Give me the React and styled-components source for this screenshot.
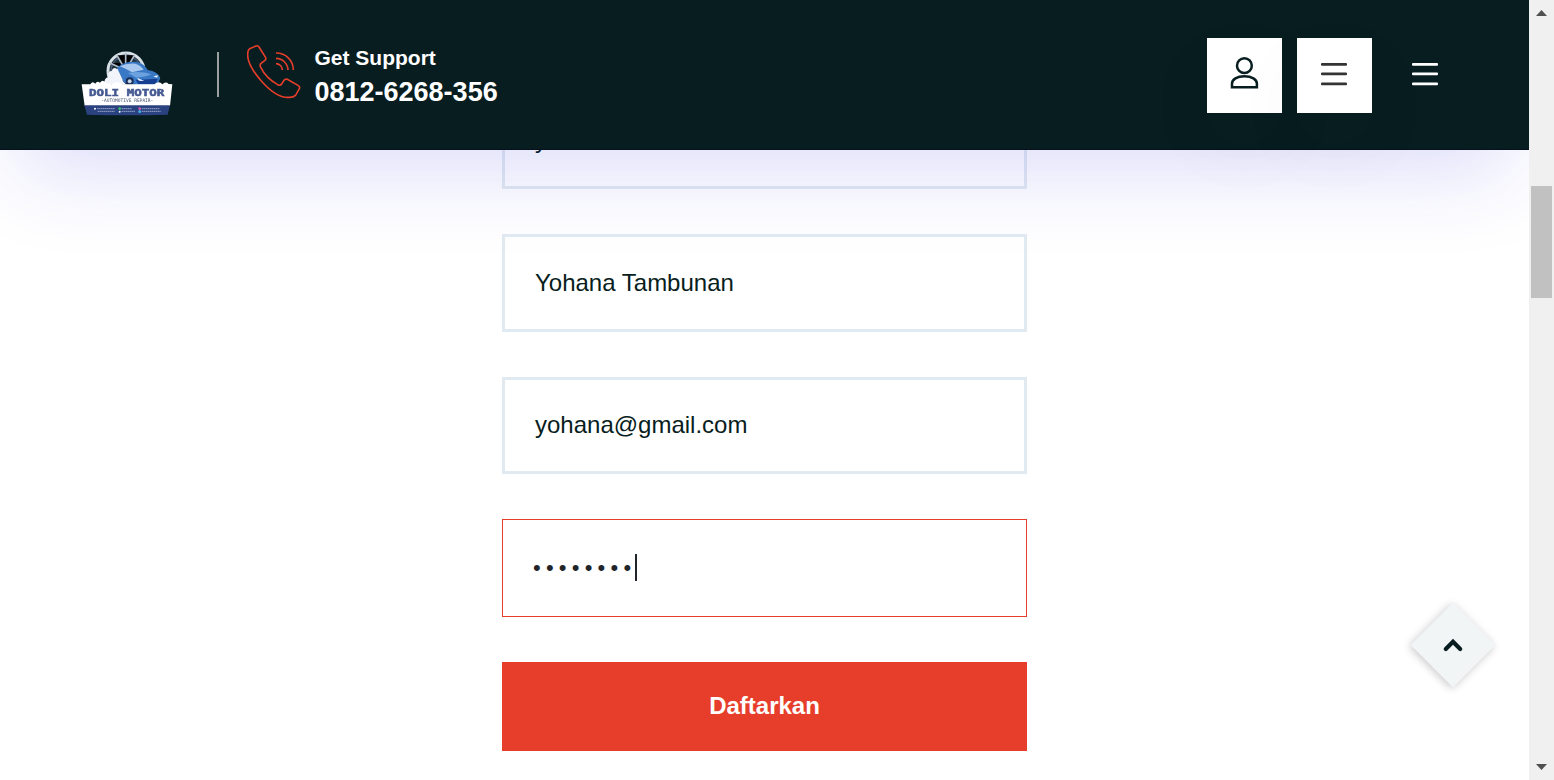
import React from "react";
import styled, { createGlobalStyle } from "styled-components";

const Global = createGlobalStyle`
  * { box-sizing: border-box; }
  body {
    margin: 0;
    overflow: hidden;
    background: #fff;
    color: #081d20;
    font-family: "Liberation Sans", Arial, sans-serif;
  }
`;

const Page = styled.div`
  display: flex;
  height: 780px;
  width: 1554px;
  overflow: hidden;
`;

const Viewport = styled.div`
  position: relative;
  width: 1529px;
  height: 780px;
  overflow: hidden;
`;

const Header = styled.header`
  position: relative;
  z-index: 2;
  display: flex;
  align-items: flex-start;
  justify-content: space-between;
  height: 150px;
  padding: 38px 67px 0 75px;
  background: #081d20;
  border-bottom: 1px solid #06101f;
  box-shadow: 0 40px 84px -18px rgba(51, 51, 225, 0.17);
`;

const Brand = styled.div`
  display: flex;
  align-items: flex-start;
`;

const LogoSvg = styled.svg`
  width: 104px;
  height: 75px;
  margin-top: 7px;
  filter: blur(0.55px);
`;

const Divider = styled.span`
  width: 2px;
  height: 45px;
  margin: 14px 28px 0 38px;
  background: #9b9f9f;
`;

const PhoneSvg = styled.svg`
  width: 55px;
  height: 55px;
  margin: 7px 12.5px 0 0;
`;

const Support = styled.div`
  display: flex;
  flex-direction: column;
  color: #fff;
  font-weight: 700;
  padding-top: 5px;
`;

const SupportLabel = styled.span`
  font-size: 21px;
  line-height: 30px;
`;

const SupportNumber = styled.span`
  font-size: 27px;
  line-height: 38px;
`;

const Actions = styled.div`
  display: flex;
  gap: 15px;
`;

const ActionButton = styled.button`
  width: 75px;
  height: 75px;
  padding: 0;
  border: 0;
  background: ${(p) => (p.$plain ? "transparent" : "#fff")};
  box-shadow: ${(p) => (p.$plain ? "none" : "0 30px 75px rgba(20, 60, 60, 0.05)")};

  svg {
    display: block;
    width: 75px;
    height: 75px;
  }
`;

const Form = styled.form`
  display: flex;
  flex-direction: column;
  width: 525px;
  margin: -59px auto 0 502px;
`;

const Field = styled.div`
  display: flex;
  align-items: center;
  height: ${(p) => p.$height}px;
  margin-bottom: 45px;
  padding: 0 0 ${(p) => p.$lift || 0}px 30px;
  border: ${(p) => (p.$focused ? "1px solid #e63e2a" : "3px solid #e2eaf1")};
  background: #fff;
  font-size: 24px;
  line-height: 28px;
`;

const Bullets = styled.span`
  color: #212529;
  font-size: 22px;
  letter-spacing: 5.22px;
`;

const Caret = styled.span`
  width: 2px;
  height: 27px;
  margin-left: -1.5px;
  background: #212529;
`;

const Submit = styled.button`
  height: 89px;
  padding: 0 0 2px;
  border: 0;
  background: #e63e2a;
  color: #fff;
  font: 700 24px/28px "Liberation Sans", Arial, sans-serif;
`;

const ToTop = styled.div`
  position: absolute;
  z-index: 3;
  left: 1423px;
  top: 615px;
  width: 60px;
  height: 60px;
  background: #f1f5f6;
  box-shadow: 0 2px 8px rgba(0, 0, 0, 0.22);
  transform: rotate(45deg);

  svg {
    display: block;
    width: 60px;
    height: 60px;
    transform: rotate(-45deg);
  }
`;

const ScrollTrack = styled.div`
  display: flex;
  flex-direction: column;
  justify-content: space-between;
  width: 25px;
  height: 780px;
  background: #f0f0f0;

  svg {
    display: block;
    width: 25px;
    height: 25px;
  }
`;

const ScrollThumb = styled.div`
  width: 21px;
  height: 112px;
  margin: 161px auto auto 2px;
  background: #c1c1c1;
`;

function Logo() {
  return (
    <LogoSvg viewBox="0 0 312 225">
      <circle cx="153" cy="78" r="54" fill="#1d3138" stroke="#d8e0e8" strokeWidth="9" />
      <circle cx="153" cy="78" r="45" fill="none" stroke="#4c5f80" strokeWidth="4" />
      <g stroke="#aebccb" strokeWidth="5">
        <path d="M152 24V76M126 31L152 76L178 31M105 54L152 76L199 54M99 82H150" />
      </g>
      <path d="M90 118Q84 101 100 96Q96 78 110 78Q114 64 125 71Q143 70 137 86Q149 96 143 107L154 119Z" fill="#f1f4fb" />
      <path d="M126 68Q148 48 184 51Q208 55 218 75Q249 80 256 99L247 119Q213 126 186 119L147 113Z" fill="#3978c4" />
      <path d="M135 64Q154 54 181 56Q197 60 206 74L171 82Q154 72 135 64Z" fill="#a9c8ef" />
      <path d="M159 84Q196 77 229 88L213 94L184 98Z" fill="#6ba2df" />
      <path d="M182 105L248 101L242 117L190 118Z" fill="#173f91" />
      <path d="M186 98L208 108L192 107ZM235 94L249 91L246 98Z" fill="#eef5ff" />
      <circle cx="164" cy="109" r="12" fill="#182d57" />
      <circle cx="164" cy="109" r="6" fill="#c5d5e8" />
      <path d="M20 118L46 118Q53 106 61 116Q66 106 75 113Q84 101 94 115L111 118Q126 106 141 118H238Q252 105 262 118Q272 108 281 117L292 118L285 183H29Z" fill="#fff" />
      <path d="M28 181H285L278 209Q157 213 36 209Z" fill="#2b4280" />
      <text x="42" y="153" fill="#465a92" stroke="#465a92" strokeWidth="1.5" fontFamily="DejaVu Sans Mono" fontSize="27" fontWeight="700" textLength="226" lengthAdjust="spacingAndGlyphs">DOLI MOTOR</text>
      <text x="79" y="171" fill="#4d5876" fontFamily="DejaVu Sans Mono" fontSize="14" textLength="156" lengthAdjust="spacingAndGlyphs">-AUTOMOTIVE REPAIR-</text>
      <g stroke="#aebbd7" strokeWidth="3" strokeDasharray="5 1">
        <path d="M66 191H120M140 191H171M200 191H254M68 199H119M140 199H180M200 199H257" opacity=".8" />
      </g>
      <circle cx="60" cy="191" r="3" fill="#fff" />
      <circle cx="134" cy="191" r="4" fill="#35c55b" />
      <circle cx="134" cy="200" r="3" fill="#fff" />
      <circle cx="194" cy="191" r="4" fill="#d55bac" />
      <circle cx="194" cy="200" r="4" fill="#44b5ed" />
    </LogoSvg>
  );
}

function PhoneIcon() {
  return (
    <PhoneSvg viewBox="21 30 165 165" fill="none" stroke="#e63e2a" strokeWidth="4.8">
      <path d="M29 41L48 33Q54 31 57 36L77 68Q79 73 74 77L63 85Q59 89 61 95Q78 130 113 149Q121 153 125 147L132 136Q136 131 142 133L175 152Q181 156 178 161L168 179Q162 187 148 187C118 190 84 160 66 140C42 113 22 85 23 58Q23 45 29 41Z" />
      <path d="M108 54A51 51 0 0 1 160 105M108 70A36 36 0 0 1 144 105M108 86A19 19 0 0 1 127 105" />
    </PhoneSvg>
  );
}

function MenuIcon({ color, offset = 0 }) {
  return (
    <svg viewBox="0 0 75 75" fill={color}>
      <rect x={24 + offset} y="25" width="26" height="2.7" rx="1" />
      <rect x={24 + offset} y="34.6" width="26" height="2.7" rx="1" />
      <rect x={24 + offset} y="44.6" width="26" height="2.7" rx="1" />
    </svg>
  );
}

export default function App() {
  return (
    <Page>
      <Global />
      <Viewport>
        <Header>
          <Brand>
            <Logo />
            <Divider />
            <PhoneIcon />
            <Support>
              <SupportLabel>Get Support</SupportLabel>
              <SupportNumber>0812-6268-356</SupportNumber>
            </Support>
          </Brand>
          <Actions>
            <ActionButton aria-label="Account">
              <svg viewBox="0 0 75 75" fill="none" stroke="#081d20" strokeWidth="2.5">
                <circle cx="37.4" cy="27.7" r="7.4" />
                <path d="M25 49.3V45.6C25 41.2 30 38.3 37.4 38.3S49.9 41.2 49.9 45.6V49.3Z" />
              </svg>
            </ActionButton>
            <ActionButton aria-label="Menu">
              <MenuIcon color="#333" />
            </ActionButton>
            <ActionButton aria-label="Navigation" $plain>
              <MenuIcon color="#fff" offset={1} />
            </ActionButton>
          </Actions>
        </Header>
        <Form>
          <Field $height={98}>yohana</Field>
          <Field $height={98}>Yohana Tambunan</Field>
          <Field $height={97} $lift={1}>yohana@gmail.com</Field>
          <Field $height={98} $lift={1} $focused>
            <Bullets>••••••••</Bullets>
            <Caret />
          </Field>
          <Submit type="button">Daftarkan</Submit>
        </Form>
        <ToTop>
          <svg viewBox="0 0 60 60" fill="none" stroke="#081d20" strokeWidth="4.2" strokeLinejoin="miter">
            <path d="M22.8 34L30 26.8L37.2 34" strokeLinecap="round" />
          </svg>
        </ToTop>
      </Viewport>
      <ScrollTrack>
        <svg viewBox="0 0 25 25"><path d="M7 16L12.5 10L18 16Z" fill="#505050" /></svg>
        <ScrollThumb />
        <svg viewBox="0 0 25 25"><path d="M7 9L12.5 15L18 9Z" fill="#505050" /></svg>
      </ScrollTrack>
    </Page>
  );
}
